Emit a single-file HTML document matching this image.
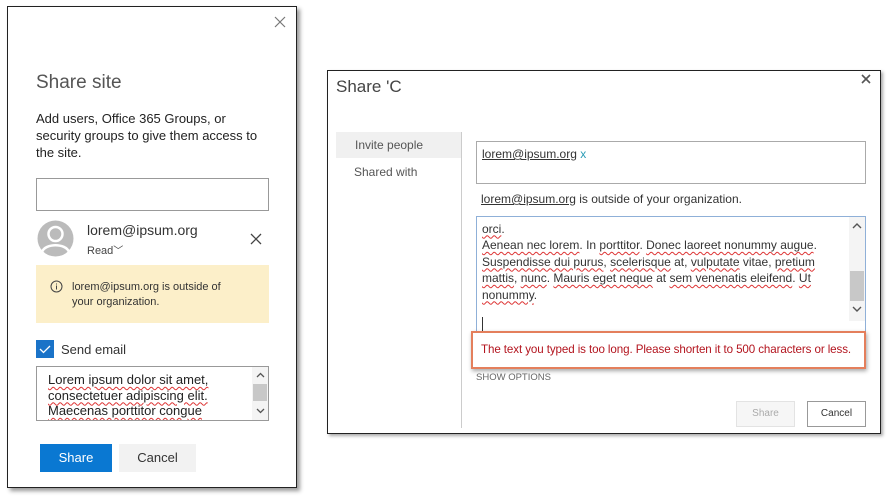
<!DOCTYPE html>
<html><head><meta charset="utf-8"><style>
*{box-sizing:border-box;margin:0;padding:0}
body{width:889px;height:496px;background:#fff;position:relative;overflow:hidden;font-family:"Liberation Sans",sans-serif;color:#333}
.a{position:absolute;white-space:nowrap}
.sq{text-decoration:underline wavy #d33;text-decoration-thickness:1px;text-underline-offset:2px}
</style></head><body>
<!-- left panel -->
<div class="a" style="left:7px;top:6px;width:290px;height:482px;border:1px solid #222;box-shadow:3px 3px 4px #999;background:#fff"></div>
<svg class="a" style="left:274px;top:16px" width="12" height="12"><path d="M1 1L11 11M11 1L1 11" stroke="#777" stroke-width="1.2"/></svg>
<div class="a" style="left:36px;top:72px;font-size:19px;color:#555">Share site</div>
<div class="a" style="left:36px;top:110px;font-size:13px;line-height:17px;color:#222">Add users, Office 365 Groups, or<br>security groups to give them access to<br>the site.</div>
<div class="a" style="left:36px;top:178px;width:233px;height:33px;border:1px solid #999"></div>
<svg class="a" style="left:37px;top:220px" width="37" height="37"><circle cx="18.5" cy="18.5" r="18" fill="#bbb"/><circle cx="18.5" cy="14" r="7" fill="none" stroke="#fff" stroke-width="2.5"/><path d="M5 32c3-9 24-9 27 0" fill="none" stroke="#fff" stroke-width="2.5"/></svg>
<div class="a" style="left:87px;top:222px;font-size:14px;color:#333">lorem@ipsum.org</div>
<div class="a" style="left:87px;top:242px;font-size:11px;color:#444">Read<span style="font-size:10px">﹀</span></div>
<svg class="a" style="left:250px;top:233px" width="12" height="12"><path d="M1 1L11 11M11 1L1 11" stroke="#444" stroke-width="1.3"/></svg>
<div class="a" style="left:36px;top:265px;width:233px;height:58px;background:#fcefc9"></div>
<svg class="a" style="left:50px;top:280px" width="13" height="13"><circle cx="6.5" cy="6.5" r="5.5" fill="none" stroke="#444"/><path d="M6.5 5.5v4M6.5 3.5v1" stroke="#444"/></svg>
<div class="a" style="left:72px;top:280px;font-size:11px;line-height:15px;color:#333">lorem@ipsum.org is outside of<br>your organization.</div>
<div class="a" style="left:36px;top:340px;width:18px;height:18px;background:#1a73c8"></div>
<svg class="a" style="left:38px;top:342px" width="14" height="14"><path d="M2 7l3.5 3.5L12 4" fill="none" stroke="#fff" stroke-width="1.3"/></svg>
<div class="a" style="left:61px;top:342px;font-size:13px;color:#333">Send email</div>
<div class="a" style="left:36px;top:366px;width:233px;height:55px;border:1px solid #999;overflow:hidden">
<div style="position:absolute;left:11px;top:5px;font-size:13px;line-height:15.5px;color:#222"><span class="sq">Lorem ipsum dolor sit amet,</span><br><span class="sq">consectetuer adipiscing elit.</span><br><span class="sq">Maecenas porttitor congue</span></div>
<div style="position:absolute;right:0;top:0;width:16px;height:53px;background:#f4f4f4"></div>
<div style="position:absolute;right:1px;top:17px;width:14px;height:17px;background:#c8c8c8"></div>
<svg style="position:absolute;right:3px;top:5px" width="9" height="6"><path d="M1 5L4.5 1.5L8 5" fill="none" stroke="#555" stroke-width="1.3"/></svg>
<svg style="position:absolute;right:3px;top:41px" width="9" height="6"><path d="M1 1L4.5 4.5L8 1" fill="none" stroke="#555" stroke-width="1.3"/></svg>
</div>
<div class="a" style="left:40px;top:444px;width:72px;height:28px;background:#0a78d2;color:#fff;font-size:13px;text-align:center;line-height:28px">Share</div>
<div class="a" style="left:119px;top:444px;width:77px;height:28px;background:#f2f2f2;color:#333;font-size:13px;text-align:center;line-height:28px">Cancel</div>

<!-- right dialog -->
<div class="a" style="left:327px;top:70px;width:554px;height:364px;border:1px solid #222;box-shadow:2px 2px 3px #aaa;background:#fff"></div>
<div class="a" style="left:336px;top:77px;font-size:17px;color:#444">Share 'C</div>
<svg class="a" style="left:861px;top:74px" width="10" height="10"><path d="M1 1L9 9M9 1L1 9" stroke="#555" stroke-width="1.6"/></svg>
<div class="a" style="left:336px;top:132px;width:125px;height:26px;background:#f0f0f0"></div>
<div class="a" style="left:355px;top:138px;font-size:12px;color:#555">Invite people</div>
<div class="a" style="left:354px;top:165px;font-size:12px;color:#555">Shared with</div>
<div class="a" style="left:461px;top:132px;width:1px;height:296px;background:#ccc"></div>
<div class="a" style="left:476px;top:141px;width:390px;height:43px;border:1px solid #aaa"></div>
<div class="a" style="left:482px;top:147px;font-size:12px;color:#333"><u>lorem@ipsum.org</u> <span style="color:#2a9bb5">x</span></div>
<div class="a" style="left:481px;top:192px;font-size:12px;color:#333"><u>lorem@ipsum.org</u> is outside of your organization.</div>
<div class="a" style="left:476px;top:216px;width:390px;height:118px;border:1px solid #8fb0d8;overflow:hidden">
<div style="position:absolute;left:5px;top:-13px;font-size:12px;line-height:16.5px;color:#333"><span style="letter-spacing:3px;color:#666">. . . . . . . . . . . . . . . . . . . . . . . . . .</span><br><span class="sq">orci</span>.<br><span class="sq">Aenean nec lorem</span>. In <span class="sq">porttitor</span>. <span class="sq">Donec laoreet nonummy augue</span>.<br><span class="sq">Suspendisse dui purus</span>, <span class="sq">scelerisque</span> at, <span class="sq">vulputate</span> vitae, <span class="sq">pretium</span><br><span class="sq">mattis</span>, <span class="sq">nunc</span>. <span class="sq">Mauris eget neque</span> at <span class="sq">sem venenatis eleifend</span>. <span class="sq">Ut</span><br><span class="sq">nonummy</span>.</div>
<div style="position:absolute;left:5px;top:100px;width:1px;height:14px;background:#333"></div>
<div style="position:absolute;right:0;top:0;width:16px;height:104px;background:#f4f4f4"></div>
<div style="position:absolute;right:1px;top:54px;width:14px;height:30px;background:#c8c8c8"></div>
<svg style="position:absolute;right:3px;top:5px" width="10" height="7"><path d="M1 6L5 2L9 6" fill="none" stroke="#555" stroke-width="1.4"/></svg>
<svg style="position:absolute;right:3px;top:89px" width="10" height="7"><path d="M1 1L5 5L9 1" fill="none" stroke="#555" stroke-width="1.4"/></svg>
</div>
<div class="a" style="left:471px;top:331px;width:395px;height:38px;border:2px solid #e47f5c;background:#fff;box-shadow:1px 2px 4px rgba(0,0,0,.35)"></div>
<div class="a" style="left:481px;top:343px;font-size:11.6px;letter-spacing:-0.1px;color:#b3141e">The text you typed is too long. Please shorten it to 500 characters or less.</div>
<div class="a" style="left:476px;top:372px;font-size:9.5px;color:#666">SHOW OPTIONS</div>
<div class="a" style="left:736px;top:401px;width:59px;height:26px;border:1px solid #e3e3e3;background:#f6f6f6;color:#aaa;font-size:10px;text-align:center;line-height:24px">Share</div>
<div class="a" style="left:807px;top:401px;width:59px;height:26px;border:1px solid #999;background:#fff;color:#333;font-size:10px;text-align:center;line-height:24px">Cancel</div>
</body></html>
